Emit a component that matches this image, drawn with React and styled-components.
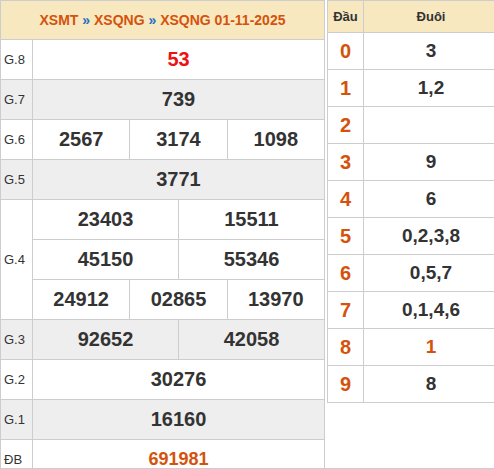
import React from "react";
import styled, { createGlobalStyle } from "styled-components";

const GlobalStyle = createGlobalStyle`
  body {
    margin: 0;
    background: #fff;
    font-family: "Liberation Sans", Arial, sans-serif;
  }
`;

const Wrapper = styled.div`
  display: flex;
  align-items: flex-start;
  width: 494px;
  height: 469px;
  overflow: hidden;
  box-sizing: border-box;
  border-bottom: 1px solid #cdcdcd;
`;

const ResultTable = styled.table`
  flex-shrink: 0;
  width: 325px;
  border-collapse: collapse;
  table-layout: fixed;

  td,
  th {
    border: 1px solid #cdcdcd;
    padding: 0;
  }
`;

const HeadCell = styled.th`
  height: 38px;
  background: #f7e8c0;
  color: #d4530c;
  font-size: 14px;
  font-weight: bold;
  text-align: center;
`;

const Sep = styled.span`
  color: #1f6fc2;
`;

const Row = styled.tr`
  background: ${(p) => (p.$alt ? "#eeeeee" : "#fff")};
`;

const Label = styled.td`
  height: 39px;
  padding-left: 3px !important;
  font-size: 13px;
  color: #333;
`;

const Value = styled.td`
  height: 39px;
  text-align: center;
  font-size: ${(p) => p.$size || 20}px;
  font-weight: bold;
  color: ${(p) => p.$color || "#333"};
`;

const LotoPanel = styled.div`
  flex: 1;
  height: 100%;
  overflow: hidden;
  padding-left: 2px;
`;

const LotoTable = styled.table`
  width: 172px;
  border-collapse: collapse;
  table-layout: fixed;

  td,
  th {
    border: 1px solid #cdcdcd;
    padding: 0;
    text-align: center;
  }
`;

const LotoHead = styled.th`
  height: 31px;
  background: #f7e8c0;
  color: #333;
  font-size: 13px;
  font-weight: bold;
`;

const HeadDigit = styled.td`
  height: 36px;
  color: #d4530c;
  font-size: 20px;
  font-weight: bold;
`;

const Tails = styled.td`
  color: ${(p) => (p.$hot ? "#d4530c" : "#333")};
  font-size: 19px;
  font-weight: bold;
`;

const prizes = [
  { name: "G.8", rows: [["53"]], color: "#ee1111" },
  { name: "G.7", rows: [["739"]] },
  { name: "G.6", rows: [["2567", "3174", "1098"]] },
  { name: "G.5", rows: [["3771"]] },
  {
    name: "G.4",
    rows: [
      ["23403", "15511"],
      ["45150", "55346"],
      ["24912", "02865", "13970"],
    ],
  },
  { name: "G.3", rows: [["92652", "42058"]] },
  { name: "G.2", rows: [["30276"]] },
  { name: "G.1", rows: [["16160"]] },
  { name: "ĐB", rows: [["691981"]], color: "#d4530c", size: 18 },
];

const loto = ["3", "1,2", "", "9", "6", "0,2,3,8", "0,5,7", "0,1,4,6", "1", "8"];

export default function App() {
  return (
    <>
      <GlobalStyle />
      <Wrapper>
        <ResultTable>
          <colgroup>
            <col style={{ width: 32 }} />
            {[0, 1, 2, 3, 4, 5].map((i) => (
              <col key={i} />
            ))}
          </colgroup>
          <tbody>
            <tr>
              <HeadCell colSpan={7}>
                XSMT <Sep>»</Sep> XSQNG <Sep>»</Sep> XSQNG 01-11-2025
              </HeadCell>
            </tr>
            {prizes.map((p, i) =>
              p.rows.map((nums, r) => (
                <Row key={p.name + r} $alt={i % 2 === 1}>
                  {r === 0 && <Label rowSpan={p.rows.length}>{p.name}</Label>}
                  {nums.map((n) => (
                    <Value
                      key={n}
                      colSpan={6 / nums.length}
                      $color={p.color}
                      $size={p.size}
                    >
                      {n}
                    </Value>
                  ))}
                </Row>
              ))
            )}
          </tbody>
        </ResultTable>
        <LotoPanel>
          <LotoTable>
            <colgroup>
              <col style={{ width: 36 }} />
              <col />
            </colgroup>
            <tbody>
              <tr>
                <LotoHead>Đầu</LotoHead>
                <LotoHead>Đuôi</LotoHead>
              </tr>
              {loto.map((t, d) => (
                <tr key={d}>
                  <HeadDigit>{d}</HeadDigit>
                  <Tails $hot={d === 8}>{t}</Tails>
                </tr>
              ))}
            </tbody>
          </LotoTable>
        </LotoPanel>
      </Wrapper>
    </>
  );
}
